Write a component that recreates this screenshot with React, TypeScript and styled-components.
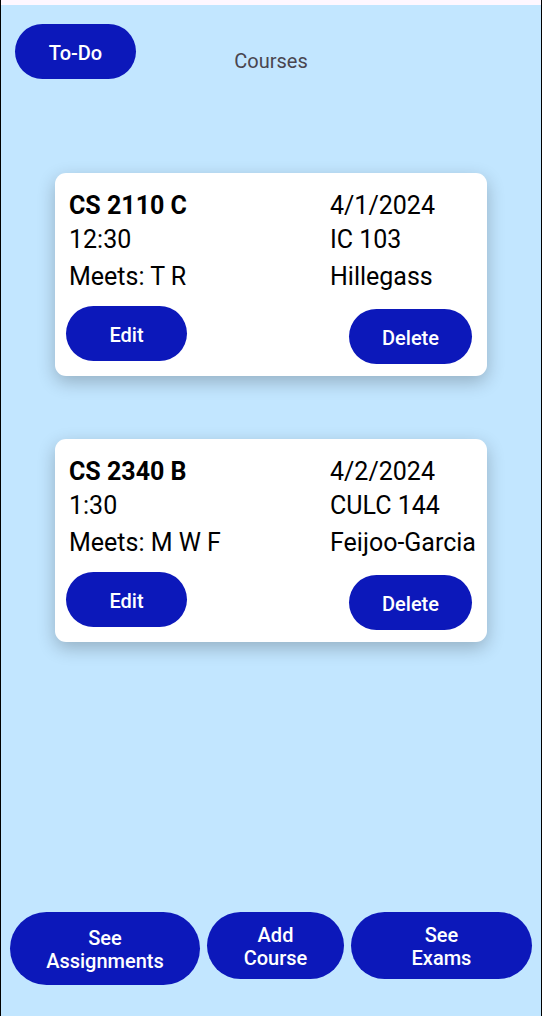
import React from "react";
import styled, { createGlobalStyle } from "styled-components";

const GlobalStyle = createGlobalStyle`
  * {
    box-sizing: border-box;
  }
  body {
    margin: 0;
    background: #c2e6ff;
    font-family: Roboto, "Liberation Sans", sans-serif;
  }
`;

const Screen = styled.div`
  display: flex;
  flex-direction: column;
  min-height: 100vh;
  border: solid #000;
  border-width: 0 1px;
  background: #c2e6ff;
`;

const StatusStrip = styled.div`
  height: 5px;
  background: #fef7ff;
`;

const Header = styled.header`
  display: grid;
  grid-template-columns: 1fr auto 1fr;
  align-items: center;
  padding: 19px 14px 0;
`;

const Title = styled.h1`
  margin: 18px 0 0;
  font-size: 20px;
  line-height: 24px;
  font-weight: 400;
  color: #49454f;
`;

const PillButton = styled.button<{ $width?: number }>`
  width: ${({ $width }) => ($width ? `${$width}px` : "auto")};
  min-height: 55px;
  padding: 2px 0 0;
  border: 0;
  border-radius: 28px;
  background: #0c18ba;
  color: #fff;
  font-family: inherit;
  font-size: 20px;
  line-height: 24px;
  font-weight: 500;
  cursor: pointer;
`;

const CourseList = styled.main`
  display: flex;
  flex: 1;
  flex-direction: column;
  gap: 63px;
  padding: 94px 10% 62px;
`;

const Card = styled.article`
  padding: 16px 0 12px 14px;
  border-radius: 11px;
  background: #fff;
  box-shadow: 0 6px 18px rgba(0, 0, 0, 0.24);
`;

const Details = styled.div`
  display: grid;
  grid-template-columns: 1fr 157px;
  grid-template-rows: 34px 34px 40px;
  align-items: center;
  font-size: 25px;
  line-height: 30px;
  color: #000;
`;

const CourseName = styled.h2`
  margin: 0;
  font-size: inherit;
  font-weight: 700;
`;

const Detail = styled.span`
  white-space: nowrap;
`;

const Actions = styled.div`
  display: flex;
  align-items: flex-start;
  justify-content: space-between;
  margin: 9px 15px 0 -3px;
`;

const DeleteButton = styled(PillButton)`
  margin-top: 3px;
`;

const Footer = styled.footer`
  display: grid;
  grid-template-columns: 190fr 137fr 181fr;
  align-items: start;
  gap: 7px;
  padding: 0 9px 31px;
`;

const FooterButton = styled(PillButton)<{ $tall?: boolean }>`
  min-height: ${({ $tall }) => ($tall ? 73 : 67)}px;
  border-radius: 37px;
  line-height: 23px;
`;

type Course = {
  name: string;
  date: string;
  time: string;
  room: string;
  days: string;
  instructor: string;
};

const courses: Course[] = [
  { name: "CS 2110 C", date: "4/1/2024", time: "12:30", room: "IC 103", days: "T R", instructor: "Hillegass" },
  { name: "CS 2340 B", date: "4/2/2024", time: "1:30", room: "CULC 144", days: "M W F", instructor: "Feijoo-Garcia" },
];

function CourseCard({ course }: { course: Course }) {
  return (
    <Card>
      <Details>
        <CourseName>{course.name}</CourseName>
        <Detail>{course.date}</Detail>
        <Detail>{course.time}</Detail>
        <Detail>{course.room}</Detail>
        <Detail>Meets: {course.days}</Detail>
        <Detail>{course.instructor}</Detail>
      </Details>
      <Actions>
        <PillButton type="button" $width={121}>Edit</PillButton>
        <DeleteButton type="button" $width={123}>Delete</DeleteButton>
      </Actions>
    </Card>
  );
}

export default function App() {
  return (
    <>
      <GlobalStyle />
      <Screen>
        <StatusStrip />
        <Header>
          <PillButton type="button" $width={121}>To-Do</PillButton>
          <Title>Courses</Title>
        </Header>
        <CourseList>
          {courses.map((course) => (
            <CourseCard key={course.name} course={course} />
          ))}
        </CourseList>
        <Footer>
          <FooterButton type="button" $tall>See<br />Assignments</FooterButton>
          <FooterButton type="button">Add<br />Course</FooterButton>
          <FooterButton type="button">See<br />Exams</FooterButton>
        </Footer>
      </Screen>
    </>
  );
}
